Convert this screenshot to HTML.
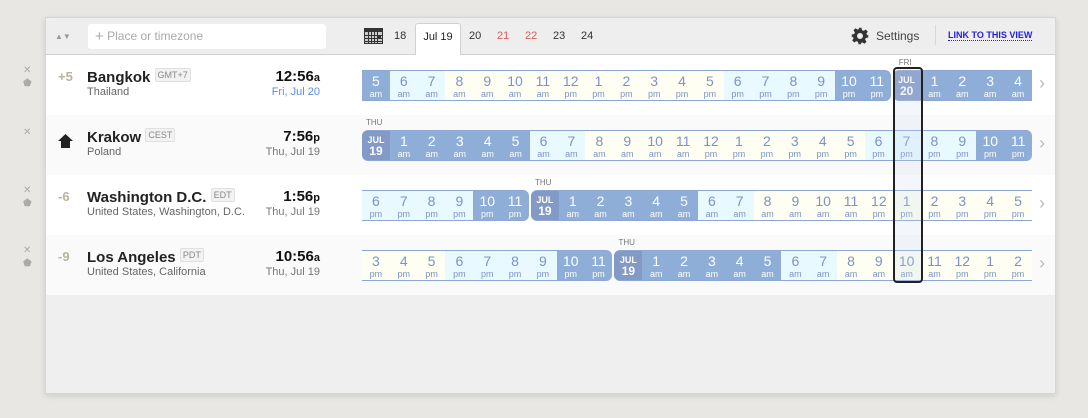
<!DOCTYPE html>
<html><head><meta charset="utf-8"><style>
*{box-sizing:border-box;margin:0;padding:0}
body{width:1088px;height:418px;overflow:hidden;background:#e9e7e4;font-family:"Liberation Sans",Arial,sans-serif;position:relative}
.card{position:absolute;left:45px;top:17px;width:1011px;height:377px;background:#efefef;border:1px solid #d6d6d6;box-shadow:0 2px 6px rgba(0,0,0,.12)}
.hdr{position:absolute;left:0;top:0;width:100%;height:37px;background:#eeeeee;border-bottom:1px solid #d0d0d0}
.row{position:absolute;left:0;width:100%;height:60px;background:#fff}
.row.alt{background:#fafafa}
.side{position:absolute;left:-23px;color:#aaa;font-size:10px}
.off{position:absolute;left:12px;top:14px;font-size:13px;font-weight:bold;color:#b8b49c}
.city{position:absolute;left:41px;top:13px;font-size:15px;font-weight:bold;color:#222;white-space:nowrap}
.tz{display:inline-block;font-size:9px;font-weight:normal;color:#888;border:1px solid #e0e0e0;background:#f2f2f2;padding:1px 2px;vertical-align:4px;border-radius:2px}
.ctry{position:absolute;left:41px;top:31px;font-size:11px;color:#666;white-space:nowrap}
.time{position:absolute;right:735px;top:13px;font-size:15px;font-weight:bold;color:#111;text-align:right;white-space:nowrap}
.time small{font-size:11px}
.date{position:absolute;right:735px;top:31px;font-size:11px;color:#777;white-space:nowrap}
.tl{position:absolute;left:316px;top:15px;width:670px;height:31px;display:flex}
.tl i{flex:1;font-style:normal;text-align:center;font-size:14px;color:#7b93c8;line-height:15px;padding-top:3px;border-top:1px solid #8ea7d2;border-bottom:1px solid #8ea7d2;position:relative}
.tl i b{display:block;font-size:9px;font-weight:normal;line-height:11px}
.tl i.n{background:#8eaed8;color:#fff}
.tl i.l{background:#e8f9ff}
.tl i.d{background:#fefff2}
.tl i.t{background:#8399c6;color:#fff;font-size:9px;font-weight:bold;line-height:10px;padding-top:4px;border-radius:6px 0 0 6px;margin-left:2px}
.tl i.t b{font-size:12px;font-weight:bold;line-height:13px}
.tl i.e{border-radius:0 6px 6px 0}
.day{position:absolute;top:-13px;left:4px;font-size:8px;color:#777;font-weight:normal}
.arr{position:absolute;left:993px;top:18px;color:#bbb;font-size:18px}
.hl{position:absolute;left:847px;top:49px;width:30px;height:216px;background:rgba(200,215,235,.22);border:2px solid #222;border-radius:4px;z-index:5}
</style></head><body>
<div class="card">
 <div class="hdr">
  <div style="position:absolute;left:9px;top:14px;font-size:8px;color:#999">▲▼</div>
  <div style="position:absolute;left:42px;top:6px;width:238px;height:25px;background:#fff;border-radius:3px;color:#aaa;font-size:12px;line-height:25px;padding-left:7px"><span style="font-size:15px;vertical-align:-1px">+</span> Place or timezone</div>
  <svg style="position:absolute;left:318px;top:10px" width="19" height="16" viewBox="0 0 19 16"><rect x="0" y="0" width="19" height="16" fill="#333"/><g fill="#ccc"><rect x="1" y="4" width="17" height="11"/></g><g stroke="#333" stroke-width="1"><path d="M4.5 4v11M7.5 4v11M10.5 4v11M13.5 4v11M1 7.5h17M1 10.5h17M1 13.5h17"/></g><rect x="14" y="8" width="3" height="3" fill="#333"/></svg>
  <div style="position:absolute;left:348px;top:12px;font-size:11px;color:#333">18</div>
  <div style="position:absolute;left:369px;top:5px;width:46px;height:33px;background:#fff;border:1px solid #d0d0d0;border-bottom:none;border-radius:3px 3px 0 0;font-size:11px;color:#222;text-align:center;line-height:26px">Jul 19</div>
  <div style="position:absolute;left:423px;top:12px;font-size:11px;color:#333">20</div>
  <div style="position:absolute;left:451px;top:12px;font-size:11px;color:#e05a5a">21</div>
  <div style="position:absolute;left:479px;top:12px;font-size:11px;color:#e05a5a">22</div>
  <div style="position:absolute;left:507px;top:12px;font-size:11px;color:#333">23</div>
  <div style="position:absolute;left:535px;top:12px;font-size:11px;color:#333">24</div>
  <svg style="position:absolute;left:805px;top:9px" width="18" height="18" viewBox="0 0 24 24"><path fill="#333" d="M10 1h4l.6 3.2 2.3 1 2.7-1.9 2.8 2.8-1.9 2.7 1 2.3L23 10v4l-3.2.6-1 2.3 1.9 2.7-2.8 2.8-2.7-1.9-2.3 1L14 23h-4l-.6-3.2-2.3-1-2.7 1.9-2.8-2.8 1.9-2.7-1-2.3L1 14v-4l3.2-.6 1-2.3-1.9-2.7 2.8-2.8 2.7 1.9 2.3-1zM12 8a4 4 0 100 8 4 4 0 000-8z"/></svg>
  <div style="position:absolute;left:830px;top:11px;font-size:12px;color:#444">Settings</div>
  <div style="position:absolute;left:889px;top:7px;width:1px;height:20px;background:#d8d8d8"></div>
  <div style="position:absolute;left:902px;top:12px;font-size:9px;font-weight:bold;color:#2222dd;border-bottom:1px dotted #2222dd">LINK TO THIS VIEW</div>
 </div>
 <div class="hl"></div>

 <div class="row" style="top:37px">
  <div class="side" style="top:10px;left:-23px">✕</div><div class="side" style="top:23px;left:-23px">⬟</div>
  <div class="off">+5</div>
  <div class="city">Bangkok <span class="tz">GMT+7</span></div>
  <div class="ctry">Thailand</div>
  <div class="time">12:56<small>a</small></div>
  <div class="date" style="color:#5b8ee6">Fri, Jul 20</div>
  <div class="tl"><i class="n">5<b>am</b></i><i class="l">6<b>am</b></i><i class="l">7<b>am</b></i><i class="d">8<b>am</b></i><i class="d">9<b>am</b></i><i class="d">10<b>am</b></i><i class="d">11<b>am</b></i><i class="d">12<b>pm</b></i><i class="d">1<b>pm</b></i><i class="d">2<b>pm</b></i><i class="d">3<b>pm</b></i><i class="d">4<b>pm</b></i><i class="d">5<b>pm</b></i><i class="l">6<b>pm</b></i><i class="l">7<b>pm</b></i><i class="l">8<b>pm</b></i><i class="l">9<b>pm</b></i><i class="n">10<b>pm</b></i><i class="n e">11<b>pm</b></i><i class="t"><span class="day" style="left:6px">FRI</span>JUL<b>20</b></i><i class="n">1<b>am</b></i><i class="n">2<b>am</b></i><i class="n">3<b>am</b></i><i class="n">4<b>am</b></i></div>
  <div class="arr">›</div>
 </div>

 <div class="row alt" style="top:97px">
  <div class="side" style="top:12px">✕</div>
  <svg style="position:absolute;left:12px;top:19px" width="15" height="14" viewBox="0 0 15 14"><path d="M7.5 0L15 7h-3v7H3V7H0z" fill="#222"/></svg>
  <div class="city">Krakow <span class="tz">CEST</span></div>
  <div class="ctry">Poland</div>
  <div class="time">7:56<small>p</small></div>
  <div class="date">Thu, Jul 19</div>
  <div class="tl"><i class="t" style="margin-left:0"><span class="day">THU</span>JUL<b>19</b></i><i class="n">1<b>am</b></i><i class="n">2<b>am</b></i><i class="n">3<b>am</b></i><i class="n">4<b>am</b></i><i class="n">5<b>am</b></i><i class="l">6<b>am</b></i><i class="l">7<b>am</b></i><i class="d">8<b>am</b></i><i class="d">9<b>am</b></i><i class="d">10<b>am</b></i><i class="d">11<b>am</b></i><i class="d">12<b>pm</b></i><i class="d">1<b>pm</b></i><i class="d">2<b>pm</b></i><i class="d">3<b>pm</b></i><i class="d">4<b>pm</b></i><i class="d">5<b>pm</b></i><i class="l">6<b>pm</b></i><i class="l">7<b>pm</b></i><i class="l">8<b>pm</b></i><i class="l">9<b>pm</b></i><i class="n">10<b>pm</b></i><i class="n e">11<b>pm</b></i></div>
  <div class="arr">›</div>
 </div>

 <div class="row" style="top:157px">
  <div class="side" style="top:10px">✕</div><div class="side" style="top:23px">⬟</div>
  <div class="off">-6</div>
  <div class="city">Washington D.C. <span class="tz">EDT</span></div>
  <div class="ctry">United States, Washington, D.C.</div>
  <div class="time">1:56<small>p</small></div>
  <div class="date">Thu, Jul 19</div>
  <div class="tl"><i class="l">6<b>pm</b></i><i class="l">7<b>pm</b></i><i class="l">8<b>pm</b></i><i class="l">9<b>pm</b></i><i class="n">10<b>pm</b></i><i class="n e">11<b>pm</b></i><i class="t"><span class="day">THU</span>JUL<b>19</b></i><i class="n">1<b>am</b></i><i class="n">2<b>am</b></i><i class="n">3<b>am</b></i><i class="n">4<b>am</b></i><i class="n">5<b>am</b></i><i class="l">6<b>am</b></i><i class="l">7<b>am</b></i><i class="d">8<b>am</b></i><i class="d">9<b>am</b></i><i class="d">10<b>am</b></i><i class="d">11<b>am</b></i><i class="d">12<b>pm</b></i><i class="d">1<b>pm</b></i><i class="d">2<b>pm</b></i><i class="d">3<b>pm</b></i><i class="d">4<b>pm</b></i><i class="d">5<b>pm</b></i></div>
  <div class="arr">›</div>
 </div>

 <div class="row alt" style="top:217px">
  <div class="side" style="top:10px">✕</div><div class="side" style="top:23px">⬟</div>
  <div class="off">-9</div>
  <div class="city">Los Angeles <span class="tz">PDT</span></div>
  <div class="ctry">United States, California</div>
  <div class="time">10:56<small>a</small></div>
  <div class="date">Thu, Jul 19</div>
  <div class="tl"><i class="d">3<b>pm</b></i><i class="d">4<b>pm</b></i><i class="d">5<b>pm</b></i><i class="l">6<b>pm</b></i><i class="l">7<b>pm</b></i><i class="l">8<b>pm</b></i><i class="l">9<b>pm</b></i><i class="n">10<b>pm</b></i><i class="n e">11<b>pm</b></i><i class="t"><span class="day">THU</span>JUL<b>19</b></i><i class="n">1<b>am</b></i><i class="n">2<b>am</b></i><i class="n">3<b>am</b></i><i class="n">4<b>am</b></i><i class="n">5<b>am</b></i><i class="l">6<b>am</b></i><i class="l">7<b>am</b></i><i class="d">8<b>am</b></i><i class="d">9<b>am</b></i><i class="d">10<b>am</b></i><i class="d">11<b>am</b></i><i class="d">12<b>pm</b></i><i class="d">1<b>pm</b></i><i class="d">2<b>pm</b></i></div>
  <div class="arr">›</div>
 </div>
</div>
</body></html>
